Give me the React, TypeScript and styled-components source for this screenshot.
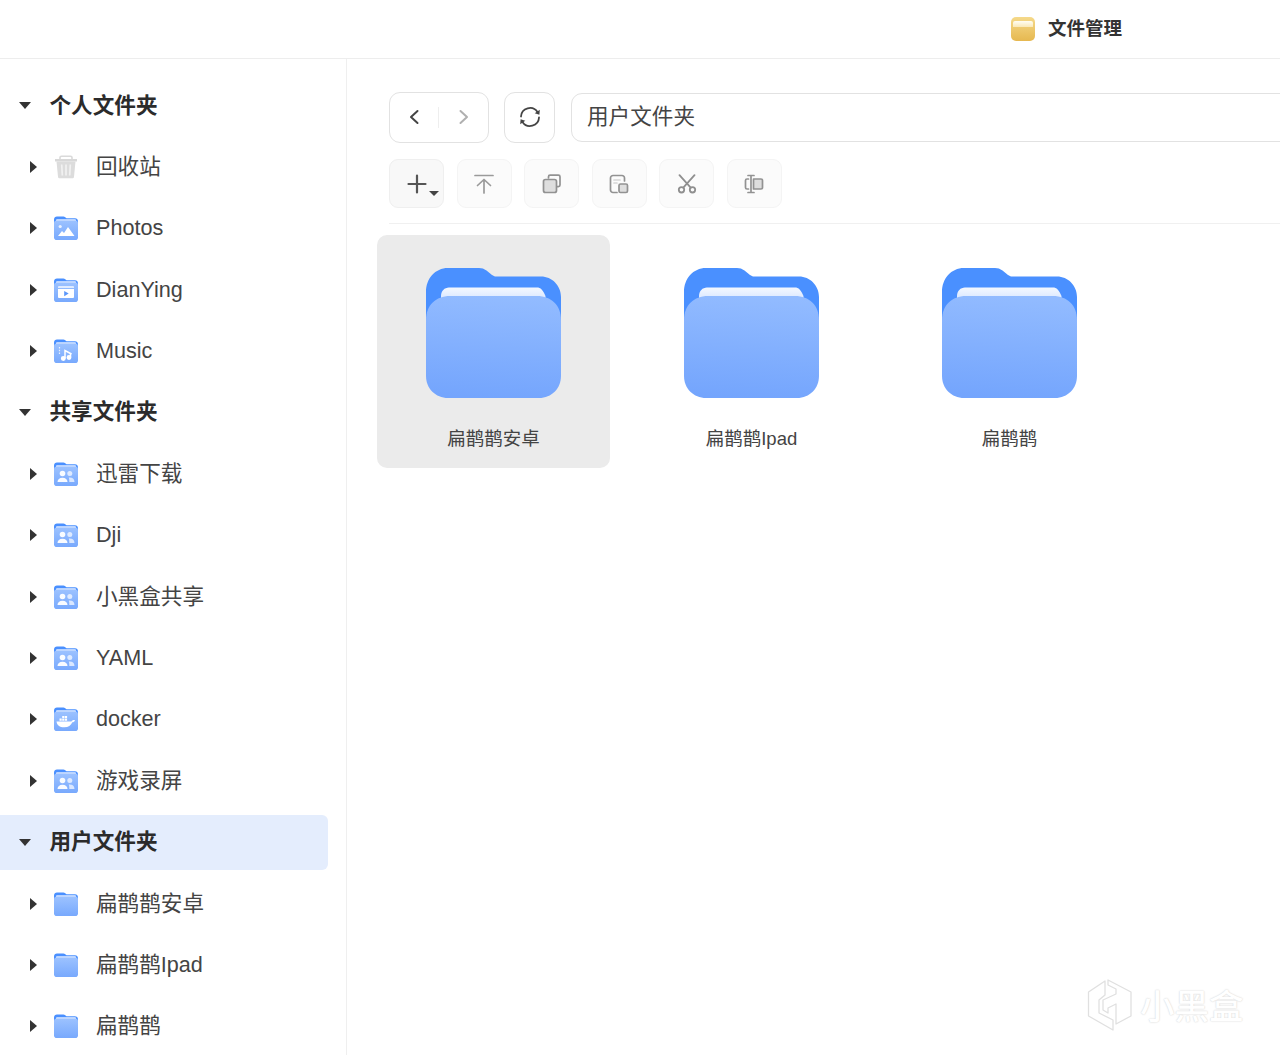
import React from "react";
import styled, { createGlobalStyle } from "styled-components";

const Global = createGlobalStyle`
  html, body { margin: 0; padding: 0; background: #fff; height: 1055px; overflow: hidden; }
  * { box-sizing: border-box; }
  body { font-family: "Liberation Sans", "Noto Sans CJK SC", sans-serif; color: #333; }
`;

const Page = styled.div`
  position: relative;
  width: 1280px;
  height: 1055px;
  display: flex;
  flex-direction: column;
  overflow: hidden;
`;
const Header = styled.header`
  height: 59px;
  flex: none;
  display: flex;
  align-items: center;
  gap: 13px;
  padding-left: 1011px;
  border-bottom: 1px solid #ededed;
`;
const AppIcon = styled.div`
  position: relative;
  width: 24px;
  height: 24px;
  border-radius: 5px;
  background: linear-gradient(180deg, #f5d98a 0%, #e6b850 100%);
  overflow: hidden;
  &::after {
    content: "";
    position: absolute;
    left: 2px;
    right: 2px;
    top: 4px;
    height: 6px;
    border-radius: 2px 2px 0 0;
    background: linear-gradient(180deg, #fffdf4, #fae9b8);
  }
`;
const AppTitle = styled.h1`
  margin: 0;
  font-size: 18.5px;
  line-height: 24px;
  font-weight: 700;
  color: #333;
`;
const Body = styled.div`
  flex: 1;
  display: flex;
  min-height: 0;
`;
const Sidebar = styled.nav`
  width: 347px;
  flex: none;
  padding-top: 19px;
  padding-right: 18px;
  border-right: 1px solid #efefef;
  display: flex;
  flex-direction: column;
  gap: 6.4px;
`;
const Row = styled.div<{ $group?: boolean; $active?: boolean }>`
  height: 55px;
  flex: none;
  display: flex;
  align-items: center;
  padding-left: ${(p) => (p.$group ? "19px" : "30px")};
  background: ${(p) => (p.$active ? "#e4edfd" : "transparent")};
  border-radius: 0 6px 6px 0;
  font-size: 21.6px;
  line-height: 24px;
  font-weight: ${(p) => (p.$group ? 700 : 400)};
  color: ${(p) => (p.$group ? "#2b2b2b" : "#444")};
`;
const ArrowDown = styled.span`
  width: 0;
  height: 0;
  border-left: 6.5px solid transparent;
  border-right: 6.5px solid transparent;
  border-top: 7px solid #333;
  margin-right: 18.5px;
`;
const ArrowRight = styled.span`
  width: 0;
  height: 0;
  border-top: 6px solid transparent;
  border-bottom: 6px solid transparent;
  border-left: 7px solid #333;
  margin-right: 16px;
`;
const RowIcon = styled.span`
  width: 26px;
  height: 26px;
  flex: none;
  margin-right: 17px;
  display: flex;
`;
const Main = styled.main`
  flex: 1;
  min-width: 0;
  padding: 33px 0 0 30px;
  overflow: hidden;
`;
const NavBar = styled.div`
  display: flex;
  align-items: center;
  margin-left: 12px;
  height: 51px;
  width: 920px;
`;
const NavGroup = styled.div`
  width: 100px;
  height: 51px;
  flex: none;
  border: 1px solid #e2e2e2;
  border-radius: 11px;
  display: flex;
  align-items: center;
  justify-content: space-between;
  padding: 0 19px 2px 19px;
  position: relative;
  &::after {
    content: "";
    position: absolute;
    left: 48px;
    top: 14px;
    height: 21px;
    width: 1px;
    background: #eeeeee;
  }
`;
const RefreshButton = styled.div`
  width: 51px;
  height: 51px;
  flex: none;
  margin-left: 15px;
  padding-bottom: 1px;
  border: 1px solid #e2e2e2;
  border-radius: 11px;
  display: flex;
  align-items: center;
  justify-content: center;
`;
const PathInput = styled.div`
  width: 760px;
  height: 49px;
  flex: none;
  margin-left: 16px;
  border: 1px solid #e2e2e2;
  border-radius: 11px;
  padding: 0 0 2px 15px;
  display: flex;
  align-items: center;
  font-size: 21.6px;
  line-height: 24px;
  color: #444;
`;
const ToolRow = styled.div`
  display: flex;
  gap: 12.5px;
  margin: 16px 0 0 12px;
  padding-bottom: 15px;
  border-bottom: 1px solid #f0f0f0;
  width: 920px;
`;
const ToolButton = styled.div<{ $primary?: boolean }>`
  position: relative;
  width: 55px;
  height: 49px;
  flex: none;
  background: ${(p) => (p.$primary ? "#f8f8f8" : "#fbfbfb")};
  border: 1px solid ${(p) => (p.$primary ? "#efefef" : "#f4f4f4")};
  border-radius: 9px;
  display: flex;
  align-items: center;
  justify-content: center;
`;
const Caret = styled.span`
  position: absolute;
  right: 4px;
  bottom: 11px;
  width: 0;
  height: 0;
  border-left: 5px solid transparent;
  border-right: 5px solid transparent;
  border-top: 5px solid #444;
`;
const Grid = styled.div`
  display: flex;
  gap: 25px;
  margin-top: 11px;
`;
const Card = styled.div<{ $selected?: boolean }>`
  width: 233px;
  height: 233px;
  flex: none;
  border-radius: 10px;
  background: ${(p) => (p.$selected ? "#ebebeb" : "transparent")};
  display: flex;
  flex-direction: column;
  align-items: center;
  padding-top: 33px;
`;
const CardLabel = styled.div`
  margin-top: 29px;
  font-size: 18.5px;
  line-height: 24px;
  color: #444;
`;
const Watermark = styled.div`
  position: absolute;
  left: 1087px;
  top: 977px;
  display: flex;
  align-items: center;
  gap: 7px;
  pointer-events: none;
`;
const WatermarkText = styled.span`
  font-family: "Noto Sans CJK SC", sans-serif;
  font-size: 34.5px;
  line-height: 54px;
  font-weight: 500;
  color: #fff;
  text-shadow: 0 0 2px #d8d8d8, 0 0 1px #e2e2e2;
`;

type Glyph = "photo" | "video" | "music" | "share" | "docker" | "none";

const MiniFolder = ({ glyph }: { glyph: Glyph }) => {
  const id = `mf-${glyph}`;
  return (
    <svg width="26" height="26" viewBox="0 0 26 26">
      <defs>
        <linearGradient id={id} x1="0" y1="0" x2="0" y2="1">
          <stop offset="0" stopColor="#9cc2ff" />
          <stop offset="1" stopColor="#78a9fd" />
        </linearGradient>
      </defs>
      <path d="M1 4.500C1 2.800 2.300 1.500 4 1.500h6.500c.6 0 1 .2 1.400.6L13.500 3.200H22c1.700 0 3 1.300 3 3V12H1z" fill="#4a90ff" />
      <rect x="3" y="4.200" width="20" height="3" rx="1" fill="#dfeaff" />
      <rect x="1" y="5.500" width="24" height="19.500" rx="2.800" fill={`url(#${id})`} />
      {glyph === "photo" && (
        <g fill="#fff">
          <circle cx="7.200" cy="11.500" r="1.600" opacity=".8" />
          <path d="M5 21l4-5 2 2 4-6 6.500 9z" />
        </g>
      )}
      {glyph === "video" && (
        <g>
          <path d="M6 9h14a1 1 0 0 1 1 1v1H5v-1a1 1 0 0 1 1-1z" fill="#fff" opacity=".7" />
          <path d="M5 12h16v8a1 1 0 0 1-1 1H6a1 1 0 0 1-1-1z" fill="#fff" />
          <path d="M11.200 14l4.500 2.600-4.500 2.600z" fill="#5b97fb" />
        </g>
      )}
      {glyph === "music" && (
        <g fill="none" stroke="#fff" strokeWidth="1.500">
          <path d="M12 20.500V12.500l6.500 3.500" />
          <path d="M17.500 15V19" />
          <circle cx="10.300" cy="20.500" r="1.700" fill="#fff" />
          <circle cx="16" cy="19.500" r="1.700" fill="#fff" />
          <path d="M6.500 9v8" strokeWidth="1.200" opacity=".8" strokeDasharray="1.500 1.200" />
        </g>
      )}
      {glyph === "share" && (
        <g fill="#fff">
          <circle cx="9.500" cy="12.500" r="2.800" opacity=".95" />
          <circle cx="16.800" cy="12.500" r="2.500" opacity=".7" />
          <path d="M4.500 21c0-2.700 2-4.300 5-4.300s5 1.600 5 4.300z" opacity=".95" />
          <path d="M15.800 16.600c3.300-.3 5.700 1.200 5.700 4.400h-5.200c0-1.800 0-3-.5-4.400z" opacity=".7" />
        </g>
      )}
      {glyph === "docker" && (
        <g fill="#fff">
          <path d="M3.500 15.500h15c.6-1.300 2-1.800 3.500-1.200-.5 1.400-1.600 2-2.700 2-1.200 3-4 5-8 5-4.800 0-7.300-2.200-7.800-5.800z" />
          <path d="M6.500 12.500h2.200v2.200H6.500zM9.200 12.500h2.200v2.200H9.200zM11.900 12.500h2.200v2.200h-2.200zM9.200 9.900h2.200v2.200H9.200zM11.900 9.900h2.200v2.200h-2.200z" />
        </g>
      )}
    </svg>
  );
};

const TrashIcon = () => (
  <svg width="26" height="26" viewBox="0 0 26 26">
    <path d="M2 5h22v2.500H2z" fill="#d8d8d8" />
    <path d="M7 5.500V3.500C7 2.700 7.700 2.200 8.500 2.200h9c.8 0 1.500.5 1.500 1.300v2" fill="none" stroke="#dadada" strokeWidth="1.600" />
    <path d="M3.500 7.500h19l-1.500 15.200c-.1 1-.8 1.600-1.700 1.600H6.700c-.9 0-1.600-.6-1.700-1.600z" fill="#dcdcdc" />
    <path d="M8.700 10.500l.6 11M13 10.500v11M17.300 10.500l-.6 11" stroke="#f1f1f1" strokeWidth="1.700" />
  </svg>
);

const LargeFolder = ({ id }: { id: string }) => (
  <svg width="135" height="130" viewBox="0 0 135 130">
    <defs>
      <linearGradient id={id} x1="0.55" y1="0" x2="0.45" y2="1">
        <stop offset="0" stopColor="#92bbff" />
        <stop offset="1" stopColor="#74a5fd" />
      </linearGradient>
      <linearGradient id={`${id}p`} x1="0" y1="0" x2="0" y2="1">
        <stop offset="0" stopColor="#f4f8ff" />
        <stop offset="1" stopColor="#c4d9ff" />
      </linearGradient>
    </defs>
    <path d="M0 24C0 10.700 9 0 22 0h31c3 0 5 .7 7.500 2.600L66 7 69 8.500h46C126 8.500 135 17.500 135 29v30H0z" fill="#4a90ff" />
    <path d="M15 28c0-5 3.500-8.500 8-8.500h88c3.500 0 6 2.500 8.500 8.500V40H15z" fill={`url(#${id}p)`} />
    <path d="M0 52c0-15 10-24 24-24h87c14 0 24 9 24 24v56c0 12.500-9.500 22-22 22H22C9.500 130 0 120.500 0 108z" fill={`url(#${id})`} />
  </svg>
);

const stroke = { fill: "none", strokeLinecap: "round", strokeLinejoin: "round" } as const;

const Chevron = ({ dir, color }: { dir: "l" | "r"; color: string }) => (
  <svg width="10" height="16" viewBox="0 0 10 16" {...stroke} stroke={color} strokeWidth="2">
    <path d={dir === "l" ? "M8.500 2L2 8l6.500 6" : "M1.500 2L8 8l-6.500 6"} />
  </svg>
);

const RefreshIcon = () => (
  <svg width="22" height="22" viewBox="0 0 22 22" {...stroke} stroke="#444" strokeWidth="1.800">
    <path d="M2 10.500A9 9 0 0 1 18.500 6" />
    <path d="M20 11.500A9 9 0 0 1 3.500 16" />
    <path d="M20.800 3.800l-.4 5-4.700-1.600z" fill="#444" stroke="none" />
    <path d="M1.200 18.200l.4-5 4.700 1.600z" fill="#444" stroke="none" />
  </svg>
);

const PlusIcon = () => (
  <svg width="20" height="20" viewBox="0 0 20 20" stroke="#555" strokeWidth="2.200" strokeLinecap="round">
    <path d="M1.500 10h17M10 1.500v17" />
  </svg>
);

const UploadIcon = () => (
  <svg width="20" height="20" viewBox="0 0 20 20" {...stroke} stroke="#9a9a9a" strokeWidth="1.700">
    <path d="M1 1.500h18M10 19V6M3.500 11.500L10 5.500l6.500 6" />
  </svg>
);

const CopyIcon = () => (
  <svg width="20" height="20" viewBox="0 0 20 20" {...stroke} stroke="#929292" strokeWidth="1.700">
    <path d="M6.500 4V2.800c0-.9.700-1.600 1.600-1.600h8.300c.9 0 1.600.7 1.600 1.600v8.300c0 .9-.7 1.600-1.600 1.600H15" />
    <rect x="1.500" y="5.500" width="13" height="13" rx="2" fill="#dedede" />
  </svg>
);

const PasteIcon = () => (
  <svg width="20" height="20" viewBox="0 0 20 20" {...stroke} stroke="#929292" strokeWidth="1.700">
    <path d="M8 18.500H4A2.500 2.500 0 0 1 1.500 16V4A2.500 2.500 0 0 1 4 1.500h9A2.500 2.500 0 0 1 15.500 4v3" />
    <path d="M5 6h6M5 9h3" stroke="#d6d6d6" />
    <rect x="10" y="10" width="8.500" height="8.500" rx="1.500" fill="#dedede" />
  </svg>
);

const ScissorsIcon = () => (
  <svg width="20" height="20" viewBox="0 0 20 20" {...stroke} stroke="#8f8f8f" strokeWidth="1.800">
    <circle cx="4.500" cy="15.800" r="2.700" />
    <circle cx="15.500" cy="15.800" r="2.700" />
    <path d="M6.300 13.700L17.500 1.200M13.700 13.700L2.500 1.200" />
  </svg>
);

const RenameIcon = () => (
  <svg width="20" height="20" viewBox="0 0 20 20" {...stroke} stroke="#929292" strokeWidth="1.700">
    <path d="M4 1.500h6M4 18.500h6M7 1.500v17" />
    <path d="M4.500 5H3a1.500 1.500 0 0 0-1.500 1.500v7A1.500 1.500 0 0 0 3 15h1.500" />
    <path d="M9.500 5H17a1.500 1.500 0 0 1 1.500 1.500v7A1.500 1.500 0 0 1 17 15H9.500z" fill="#dedede" />
  </svg>
);

const LogoMark = () => (
  <svg width="46" height="54" viewBox="0 0 46 54" fill="#fff" stroke="#e0e0e0" strokeWidth="1.300" strokeLinejoin="round">
    <path d="M1.500 15L18 4V18L12 23V36L26 43V53L1.500 39z" />
    <path d="M21 3L44 15V39L29 47V27L21 31V36L16 33V23L29 17V12L21 8z" />
  </svg>
);

type Item = { label: string; glyph?: Glyph; trash?: boolean };
const sections: { title: string; active?: boolean; items: Item[] }[] = [
  {
    title: "个人文件夹",
    items: [
      { label: "回收站", trash: true },
      { label: "Photos", glyph: "photo" },
      { label: "DianYing", glyph: "video" },
      { label: "Music", glyph: "music" },
    ],
  },
  {
    title: "共享文件夹",
    items: [
      { label: "迅雷下载", glyph: "share" },
      { label: "Dji", glyph: "share" },
      { label: "小黑盒共享", glyph: "share" },
      { label: "YAML", glyph: "share" },
      { label: "docker", glyph: "docker" },
      { label: "游戏录屏", glyph: "share" },
    ],
  },
  {
    title: "用户文件夹",
    active: true,
    items: [
      { label: "扁鹊鹊安卓", glyph: "none" },
      { label: "扁鹊鹊Ipad", glyph: "none" },
      { label: "扁鹊鹊", glyph: "none" },
    ],
  },
];

const cards = ["扁鹊鹊安卓", "扁鹊鹊Ipad", "扁鹊鹊"];

export default function App() {
  return (
    <Page>
      <Global />
      <Header>
        <AppIcon />
        <AppTitle>文件管理</AppTitle>
      </Header>
      <Body>
        <Sidebar>
          {sections.map((s) => (
            <React.Fragment key={s.title}>
              <Row $group $active={s.active}>
                <ArrowDown />
                {s.title}
              </Row>
              {s.items.map((it) => (
                <Row key={it.label}>
                  <ArrowRight />
                  <RowIcon>{it.trash ? <TrashIcon /> : <MiniFolder glyph={it.glyph ?? "none"} />}</RowIcon>
                  {it.label}
                </Row>
              ))}
            </React.Fragment>
          ))}
        </Sidebar>
        <Main>
          <NavBar>
            <NavGroup>
              <Chevron dir="l" color="#444" />
              <Chevron dir="r" color="#b0b0b0" />
            </NavGroup>
            <RefreshButton>
              <RefreshIcon />
            </RefreshButton>
            <PathInput>用户文件夹</PathInput>
          </NavBar>
          <ToolRow>
            <ToolButton $primary>
              <PlusIcon />
              <Caret />
            </ToolButton>
            <ToolButton><UploadIcon /></ToolButton>
            <ToolButton><CopyIcon /></ToolButton>
            <ToolButton><PasteIcon /></ToolButton>
            <ToolButton><ScissorsIcon /></ToolButton>
            <ToolButton><RenameIcon /></ToolButton>
          </ToolRow>
          <Grid>
            {cards.map((c, i) => (
              <Card key={c} $selected={i === 0}>
                <LargeFolder id={`lf${i}`} />
                <CardLabel>{c}</CardLabel>
              </Card>
            ))}
          </Grid>
        </Main>
      </Body>
      <Watermark>
        <LogoMark />
        <WatermarkText>小黑盒</WatermarkText>
      </Watermark>
    </Page>
  );
}
